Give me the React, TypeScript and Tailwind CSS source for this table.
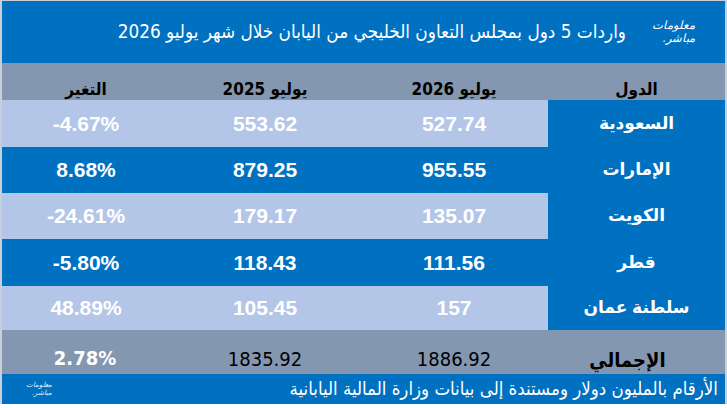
const rows = [
  { name: "السعودية", y26: "527.74", y25: "553.62", chg: "-4.67%", h: "h-[47px]" },
  { name: "الإمارات", y26: "955.55", y25: "879.25", chg: "8.68%", h: "h-[46px]" },
  { name: "الكويت", y26: "135.07", y25: "179.17", chg: "-24.61%", h: "h-[46px]" },
  { name: "قطر", y26: "111.56", y25: "118.43", chg: "-5.80%", h: "h-[47px]" },
  { name: "سلطنة عمان", y26: "157", y25: "105.45", chg: "48.89%", h: "h-[44px]" },
];

const narrow = "font-['Liberation_Sans_Narrow','DejaVu_Sans_Condensed','DejaVu_Sans',sans-serif]";
const arial = "font-['Liberation_Sans','DejaVu_Sans',sans-serif]";

function Logo({ small }: { small?: boolean }) {
  return (
    <div
      dir="rtl"
      className={
        small
          ? "flex flex-col items-start text-[7px] italic leading-[8px] text-white/90"
          : "flex flex-col items-start text-[11.5px] italic leading-[13px] text-white"
      }
    >
      <span>معلومات</span>
      <span>مباشر.</span>
    </div>
  );
}

export default function App() {
  return (
    <div className="h-[408px] w-[727px] bg-white">
      <div className="bg-[#c7cfdb] px-[2px] pt-px">
        <header
          dir="rtl"
          className={`flex h-[62px] items-center gap-[26px] bg-[#0070c0] pr-[30px] text-white ${narrow}`}
        >
          <Logo />
          <h1 className="text-[18.8px] leading-none">
            واردات 5 دول بمجلس التعاون الخليجي من اليابان خلال شهر يوليو 2026
          </h1>
        </header>

        <div dir="rtl" className="grid grid-cols-[177px_188px_190px_168px]">
          {/* column titles */}
          {["الدول", "يوليو 2026", "يوليو 2025", "التغير"].map((t) => (
            <div
              key={t}
              className={`flex h-[37px] items-end justify-center bg-[#8497b0] pb-[2px] text-[17px] font-bold leading-none text-black ${narrow}`}
            >
              {t}
            </div>
          ))}

          {rows.map((r, i) => {
            const bg = i % 2 === 0 ? "bg-[#b4c6e7]" : "bg-[#0070c0]";
            return (
              <div key={r.name} className="contents">
                <div
                  className={`flex ${r.h} items-center justify-center bg-[#0070c0] text-[17px] font-bold text-white ${arial}`}
                >
                  {r.name}
                </div>
                {[r.y26, r.y25, r.chg].map((v, j) => (
                  <div
                    key={j}
                    dir="ltr"
                    className={`flex ${r.h} items-center justify-center ${bg} text-[21px] font-bold text-white ${arial}`}
                  >
                    {v}
                  </div>
                ))}
              </div>
            );
          })}

          {/* totals */}
          <div
            className={`flex h-[44px] items-end justify-center bg-[#8497b0] pb-[4px] pr-[18px] text-[20px] font-bold leading-none text-black ${narrow}`}
          >
            الإجمالي
          </div>
          <div
            className={`flex h-[44px] items-end justify-center bg-[#8497b0] pb-[5px] text-[20px] leading-none text-black ${narrow}`}
          >
            1886.92
          </div>
          <div
            className={`flex h-[44px] items-end justify-center bg-[#8497b0] pb-[5px] text-[20px] leading-none text-black ${narrow}`}
          >
            1835.92
          </div>
          <div
            dir="ltr"
            className={`flex h-[44px] items-start justify-center bg-[#8497b0] pt-[18px] pr-[2px] text-[20px] font-bold leading-none text-white ${narrow}`}
          >
            2.78%
          </div>
        </div>

        <footer
          dir="rtl"
          className={`flex h-[30px] items-center justify-between bg-[#0070c0] pr-[7px] pl-[24px] text-white ${narrow}`}
        >
          <span className="text-[18.5px] leading-none">
            الأرقام بالمليون دولار ومستندة إلى بيانات وزارة المالية اليابانية
          </span>
          <Logo small />
        </footer>
      </div>
    </div>
  );
}
